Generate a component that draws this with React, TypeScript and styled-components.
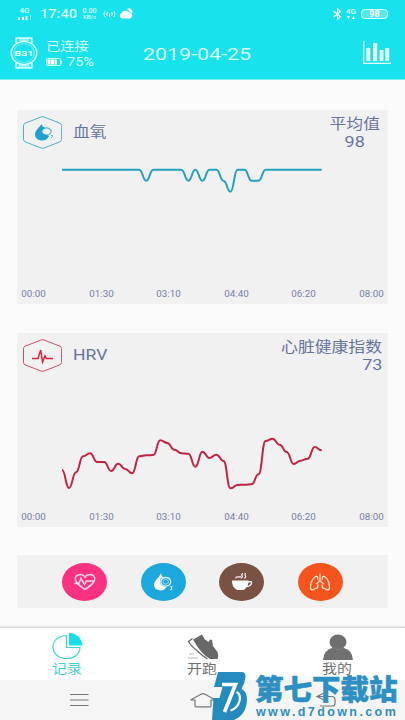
import styled, { createGlobalStyle } from 'styled-components';

import type { ReactNode } from 'react';

const STEP = 7.02;
const CHART_LEFT = 45;

const TIMES = ['00:00', '01:30', '03:10', '04:40', '06:20', '08:00'];

const OXYGEN = [
	98, 98, 98, 98, 98, 98, 98, 98, 98, 98, 98, 98, 97, 98, 98, 98, 98, 98, 97,
	98, 97, 98, 98, 97, 96, 98, 98, 97, 97, 98, 98, 98, 98, 98, 98, 98, 98, 98,
].map(value => 7.7 + (98 - value) * 11);

const HRV = [
	85, 103, 87.3, 71.3, 68.3, 77, 77, 86, 78.7, 84, 88.3, 71.3, 70.3, 70, 55.3,
	58, 64.7, 68.3, 68.7, 81.7, 66.7, 73, 69.7, 76, 103.3, 100, 99.7, 99.3, 89.3,
	56, 53.7, 59.7, 67, 79, 75.7, 73.7, 62, 65.3,
];

// Horizontal bezier: both control points sit halfway between two samples
function smoothPath(values: number[]) {
	return values
		.map((y, i) => {
			const x = CHART_LEFT + i * STEP;
			if (i === 0) return `M${x} ${y}`;
			const mid = x - STEP / 2;
			return `C${mid} ${values[i - 1]} ${mid} ${y} ${x} ${y}`;
		})
		.join('');
}

interface ChartCardProps {
	title: string;
	titleScale: number;
	label: string;
	value: string;
	align: 'center' | 'flex-end';
	color: string;
	values: number[];
	icon: ReactNode;
}

function ChartCard(props: ChartCardProps) {
	return (
		<Card>
			<CardHeader>
				<HexIcon viewBox="0 0 39 33" fill="none">
					<path
						d="M18 1 Q19.5 .4 21 1 L37 7.2 Q38.6 8 38.6 9.5 V23.5 Q38.6 25 37 25.8 L21 32 Q19.5 32.6 18 32 L2 25.8 Q.5 25 .5 23.5 V9.5 Q.5 8 2 7.2Z"
						stroke={props.color}
						strokeWidth=".8"
					/>
					{props.icon}
				</HexIcon>
				<CardTitle $scale={props.titleScale}>{props.title}</CardTitle>
				<Summary $align={props.align}>
					<SummaryLabel $align={props.align}>{props.label}</SummaryLabel>
					<SummaryValue $align={props.align}>{props.value}</SummaryValue>
				</Summary>
			</CardHeader>
			<Chart viewBox="0 0 371 122" fill="none">
				<path
					d={smoothPath(props.values)}
					stroke={props.color}
					strokeWidth="2"
				/>
			</Chart>
			<Axis>
				{TIMES.map(time => (
					<Tick key={time}>{time}</Tick>
				))}
			</Axis>
		</Card>
	);
}

function Header() {
	return (
		<TopBar>
			<StatusBar>
				<Signal>
					<Tiny $size={8}>4G</Tiny>
					<svg width="13" height="5" viewBox="0 0 13 5" fill="#fff">
						<path d="M0 2.5h2V5H0zM4 2h2v3H4zM7.5 1h2v4h-2z" />
						<path d="M12 0h1v5h-1z" opacity=".5" />
					</svg>
				</Signal>
				<Clock>17:40</Clock>
				<Speed>
					<Tiny $size={7}>0.00</Tiny>
					<Tiny $size={6}>KB/s</Tiny>
				</Speed>
				<WaveIcon viewBox="0 0 13 8" fill="none" stroke="#fff" strokeWidth=".9">
					<path d="M2.2 1Q-.4 4 2.2 7M4.4 2.2q-1.6 1.8 0 3.6M10.8 1q2.6 3 0 6M8.6 2.2q1.6 1.8 0 3.6M6.5 3.3V7" />
				</WaveIcon>
				<CloudIcon viewBox="0 0 14 11" fill="#fff">
					<path d="M3 10.5a2.9 2.9 0 0 1-.3-5.6A4 4 0 0 1 9.7 4.3a3.2 3.2 0 0 1 1.3 6.2z" />
					<path d="M8 1a3.4 3.4 0 0 1 5 4.4Q11.600 4 10.400 3.700 9.600 2 8 1z" />
				</CloudIcon>
				<StatusEnd>
					<svg width="9" height="12" viewBox="0 0 9 12" fill="none" stroke="#fff" strokeWidth="1.1">
						<path d="M.8 3.2 7.5 8.6 4.5 11V1l3 2.4L.8 8.8" />
					</svg>
					<Signal $narrow>
						<Tiny $size={8}>4G</Tiny>
						<svg width="8" height="3" viewBox="0 0 8 3" fill="#fff">
							<path d="M0 0h3L1.5 3zM5 3h3L6.5 0z" />
						</svg>
					</Signal>
					<PhoneBattery>98</PhoneBattery>
				</StatusEnd>
			</StatusBar>
			<TitleBar>
				<WatchIcon viewBox="0 0 28 32" fill="none" stroke="#d4fcfc">
					<path d="M6.3 6V1.2h15.4V6M6.3 26v4.8h15.4V26" strokeWidth="1.8" />
					<path d="M9 3.2h10M9 28.8h10" strokeWidth="1.3" />
					<ellipse cx="14" cy="16" rx="12.7" ry="11.5" strokeWidth="1.6" />
					<ellipse cx="14" cy="16" rx="10.4" ry="9.3" strokeWidth=".5" />
					<text
						x="14"
						y="18.8"
						textAnchor="middle"
						textLength="19"
						lengthAdjust="spacingAndGlyphs"
						fill="#e8ffff"
						stroke="none"
						fontSize="8"
						fontWeight="700"
					>
						B31
					</text>
				</WatchIcon>
				<Device>
					<DeviceState>已连接</DeviceState>
					<DeviceBattery>
						<svg width="17" height="8" viewBox="0 0 17 8" fill="none">
							<rect x=".5" y=".5" width="14" height="7" rx="1" stroke="#d8ffff" />
							<path d="M1.5 1.5h3v5h-3zM5 1.500h3v5H5zM8.500 1.500h2.500v5H8.500zM15.200 2.500H16v3h-.8z" fill="#fff" />
						</svg>
						<Percent>75%</Percent>
					</DeviceBattery>
				</Device>
				<DateText>2019-04-25</DateText>
				<StatsIcon viewBox="0 0 28 24" fill="#e8ffff">
					<path d="M0 0h1.3v21.8H28V23H0z" />
					<path d="M3.3 7h4v13h-4zM10 2h4.2v18H10zM16.6 9h3.8v11h-3.8zM22.3 7h3.9v13h-3.9z" />
				</StatsIcon>
			</TitleBar>
		</TopBar>
	);
}

function HeartGlyph() {
	return (
		<Glyph viewBox="0 0 24 18" fill="none" stroke="#ffd9e8" strokeWidth="1.5">
			<path d="M12 16.5C7 13 2.3 10 2.3 5.8 2.3 1 9.2.2 12 4 14.8.2 21.7 1 21.7 5.8 21.7 10 17 13 12 16.5z" />
			<path d="M1.500 10.500 6 10l2-4.500 3.500 6 2-3.500H21" />
		</Glyph>
	);
}

function DropGlyph() {
	return (
		<Glyph viewBox="0 0 24 18" fill="none">
			<path d="M10 0C9 3.8 3 7.5 3 12.2a6.5 5.8 0 0 0 12.5 1.5q-6.500 0-6.500-4.700Q9 5 12 4.200 10 2.500 10 0z" fill="#fff" />
			<ellipse cx="14.8" cy="8.8" rx="4.9" ry="4.3" stroke="#e8faff" strokeWidth="1.3" />
			<ellipse cx="14.8" cy="8.8" rx="2.7" ry="2.3" stroke="#bdeafa" strokeWidth=".7" />
			<path d="M19 13.6h2.3L20 15q1.7 0 1 1.5-1 .6-2 0" stroke="#e8faff" strokeWidth=".8" />
		</Glyph>
	);
}

function CupGlyph() {
	return (
		<Glyph viewBox="0 0 24 18" fill="none">
			<path d="M2 7.5h16.5c0 5-2 7.7-4 8.7l-.5.8H7l-.8-.8C3.8 15 2 12.5 2 7.5z" fill="#fff" />
			<path d="M18 9q3.800-1 3.600 1-.5 3-5 3.600" stroke="#fff" strokeWidth="1.400" />
			<path d="M5.500 5.300Q6 3.600 8 4t2.500-1M10.500 5Q13 4.500 12 2.800T13 .6M14 5.300q2.300-1 1.400-2.600T15.600 0" stroke="#fff" strokeWidth="1.100" />
		</Glyph>
	);
}

function LungsGlyph() {
	return (
		<Glyph viewBox="0 0 24 18" fill="none" stroke="#ffe0cc" strokeWidth="1.3">
			<path d="M12 .5V8L8.2 11M12 8l3.8 3" />
			<path d="M9.800 7V5.500C9.800 3.600 8.600 3 7.300 3.800 4.200 6 2.500 10.500 2.500 14.500c0 2.500 1.300 2.700 3.200 1.800l2-.8q2.600-.6 2.200-4" />
			<path d="M14.200 7V5.500c0-1.900 1.200-2.500 2.500-1.700 3.100 2.200 4.800 6.700 4.800 10.700 0 2.500-1.300 2.700-3.200 1.800l-2-.8q-2.600-.6-2.200-4" />
		</Glyph>
	);
}

function Watermark() {
	return (
		<WatermarkBox>
			<svg width="36" height="48" viewBox="0 0 36 48">
				<path
					d="M6 0h23q5 0 4.500 5-.5 6-4 12 6 3 5.500 11-1 15-13 20H0l1.500-22h6l3-11H2z"
					fill="#258bbd"
				/>
				<path d="M10 12.500h13.500L12.500 40" fill="none" stroke="#fff" strokeWidth="3.600" />
				<path d="M24.500 20q4.500 2 3 9-2 7.500-9 9.500" fill="none" stroke="#fff" strokeWidth="2.200" />
			</svg>
			<WatermarkText>
				<SiteName>第七下载站</SiteName>
				<SiteUrl>www.d7down.com</SiteUrl>
			</WatermarkText>
		</WatermarkBox>
	);
}

export default function App() {
	return (
		<>
			<GlobalStyle />
			<Screen>
				<Header />
				<Content>
					<ChartCard
						title="血氧"
						titleScale={1.15}
						label="平均值"
						value="98"
						align="center"
						color="#249fbd"
						values={OXYGEN}
						icon={
							<>
								<path d="M18.5 8C17 11 12 14 12 18.5 12 22 15 24.5 19 24.5q5 0 7-4.5l-6-3 2-5.500Q19 11 18.500 8z" fill="#1fa0d2" />
								<ellipse cx="23.5" cy="15.5" rx="4.6" ry="3.6" fill="#f1f1f1" stroke="#1fa0d2" />
								<path d="M28 19.5q2-.5 1.5.8L28 22" stroke="#1fa0d2" strokeWidth=".8" />
							</>
						}
					/>
					<ChartCard
						title="HRV"
						titleScale={1.13}
						label="心脏健康指数"
						value="73"
						align="flex-end"
						color="#c22443"
						values={HRV}
						icon={
							<path
								d="M9 19.500h6l2.700-8.500L19.500 23l2.500-6 1.500 2.500h6.500"
								stroke="#dc2340"
								strokeWidth="1.500"
							/>
						}
					/>
					<Actions>
						<Action $color="#fb3282"><HeartGlyph /></Action>
						<Action $color="#1ca8dd"><DropGlyph /></Action>
						<Action $color="#795243"><CupGlyph /></Action>
						<Action $color="#f3551c"><LungsGlyph /></Action>
					</Actions>
				</Content>
				<TabBar>
					<Tab $active>
						<TabIcon viewBox="0 0 32 27" fill="none">
							<path d="M14.5 2.5C6.5 2.7 1 7.5 1 14s6 11.5 13.5 11.5S28 21 28 14.5H14.5z" stroke="#46cfd3" strokeWidth="1.2" />
							<path d="M17 0q12 .8 13.5 12.5H17z" fill="#18dfe6" />
						</TabIcon>
						<TabLabel>记录</TabLabel>
					</Tab>
					<Tab>
						<TabIcon viewBox="0 0 32 27">
							<path d="M6 6.500 15 1.500l2.500 4.500 4 3 1.500-2.500 2 .5 1 6 4.500 6q1.500 4 0 7H23Q14 21 6 6.500z" fill="#686868" />
							<path d="M5.500 5.500 1.500 8.500Q4 13 11 18.500q5 5 9.500 7.500" fill="none" stroke="#686868" strokeWidth="1.300" />
							<path d="M2 21h5M1 25h10" stroke="#aaa" strokeWidth=".8" />
						</TabIcon>
						<TabLabel>开跑</TabLabel>
					</Tab>
					<Tab>
						<TabIcon viewBox="0 0 32 27" fill="#707070">
							<ellipse cx="16" cy="9" rx="8.5" ry="7.5" />
							<path d="M1 27q.5-10 10-12.2 5 3 10 0Q30.5 17 31 27z" />
						</TabIcon>
						<TabLabel>我的</TabLabel>
					</Tab>
				</TabBar>
				<SystemNav>
					<NavIcon viewBox="0 0 28 16">
						<path d="M5 2.5h18.5M5 8h18.5M5 13.5h18.5" />
					</NavIcon>
					<NavIcon viewBox="0 0 28 16">
						<path d="M6 8H1.5L12 2.2q2-1 4 0L26.5 8H22v6q0 .8-1 .8H7q-1 0-1-.8z" />
					</NavIcon>
					<NavIcon viewBox="0 0 28 16">
						<path d="M11 1 4 4.5 11 8M4 4.500h15q3 0 3 3v4q0 2.500-3 2.500H7" />
					</NavIcon>
				</SystemNav>
				<Watermark />
			</Screen>
		</>
	);
}

const GlobalStyle = createGlobalStyle`
	* {
		box-sizing: border-box;
	}

	body {
		margin: 0;
		overflow: hidden;
		font-family: Roboto, 'Noto Sans CJK SC', sans-serif;
	}

	svg {
		display: block;
		flex-shrink: 0;
	}
`;

const Screen = styled.div`
	position: relative;
	display: flex;
	flex-direction: column;
	width: 405px;
	height: 720px;
	background: #fbfbfb;
	overflow: hidden;
`;

const TopBar = styled.header`
	height: 80px;
	background: #18e2eb;
	border-bottom: 1px solid #7cecf0;
	color: #d8fdfd;
`;

const StatusBar = styled.div`
	display: flex;
	align-items: center;
	height: 27px;
	padding: 0 17px;
`;

const Signal = styled.div<{ $narrow?: boolean }>`
	display: flex;
	flex-direction: column;
	align-items: center;
	gap: 1px;
	width: ${({ $narrow }) => ($narrow ? 12 : 15)}px;
`;

const Tiny = styled.span<{ $size: number }>`
	font-size: ${({ $size }) => $size}px;
	line-height: 6px;
	font-weight: 500;
`;

const Clock = styled.span`
	width: 37px;
	margin-left: 7.5px;
	font-size: 12.5px;
	line-height: 14px;
	font-weight: 500;
	transform: scaleX(1.17);
	transform-origin: left;
`;

const Speed = styled.div`
	display: flex;
	flex-direction: column;
	align-items: center;
	width: 16px;
	margin-left: 5px;
`;

const WaveIcon = styled.svg`
	width: 13px;
	height: 8px;
	margin-left: 5px;
`;

const CloudIcon = styled.svg`
	width: 14px;
	height: 11px;
	margin-left: 3px;
`;

const StatusEnd = styled.div`
	display: flex;
	align-items: center;
	gap: 3px;
	margin-left: auto;
`;

const PhoneBattery = styled.div`
	width: 27px;
	height: 10px;
	margin-left: 1px;
	border: 1px solid #d8fdfd;
	border-radius: 4px;
	background: #58e6ed;
	color: #fff;
	font-size: 9px;
	line-height: 8px;
	font-weight: 700;
	text-align: center;
`;

const TitleBar = styled.div`
	display: flex;
	align-items: center;
	height: 52px;
	padding: 0 14px 0 10px;
`;

const WatchIcon = styled.svg`
	width: 28px;
	height: 32px;
`;

const Device = styled.div`
	width: 97px;
	padding: 2px 0 0 8px;
`;

const DeviceState = styled.div`
	width: 39px;
	font-size: 12.5px;
	line-height: 15px;
	transform: scaleX(1.14);
	transform-origin: left;
`;

const DeviceBattery = styled.div`
	display: flex;
	align-items: center;
	gap: 4px;
	height: 15px;
`;

const Percent = styled.span`
	font-size: 12.5px;
	line-height: 15px;
	transform: scaleX(1.16);
	transform-origin: left;
`;

const DateText = styled.h1`
	margin: 2px 0 0 8px;
	font-size: 17px;
	font-weight: 400;
	line-height: 20px;
	transform: scaleX(1.26);
	transform-origin: left;
`;

const StatsIcon = styled.svg`
	width: 28px;
	height: 24px;
	margin-left: auto;
`;

const Content = styled.main`
	display: flex;
	flex-direction: column;
	gap: 29px;
	height: 547px;
	padding: 30px 17px 0;
`;

const Card = styled.section`
	flex-shrink: 0;
	height: 194px;
	background: #f1f1f1;
	color: #6674a0;
`;

const CardHeader = styled.div`
	display: flex;
	height: 52px;
	padding: 6px 6px 0;
`;

const HexIcon = styled.svg`
	width: 39px;
	height: 33px;
`;

const CardTitle = styled.h2<{ $scale: number }>`
	margin: 0 0 0 11px;
	font-size: ${({ $scale }) => ($scale > 1.14 ? 14.5 : 15.5)}px;
	font-weight: 400;
	line-height: 33px;
	transform: scaleX(${({ $scale }) => $scale});
	transform-origin: left;
`;

const Summary = styled.div<{ $align: string }>`
	display: flex;
	flex-direction: column;
	align-items: ${({ $align }) => $align};
	margin-left: auto;
	padding-right: ${({ $align }) => ($align === 'center' ? 6 : 0)}px;
`;

const SummaryLabel = styled.span<{ $align: string }>`
	font-size: 14.5px;
	line-height: 17px;
	transform: scaleX(1.16);
	transform-origin: ${({ $align }) => ($align === 'center' ? 'center' : 'right')};
`;

const SummaryValue = styled(SummaryLabel)`
	font-size: 15.5px;
	line-height: 18px;
`;

const Chart = styled.svg`
	width: 371px;
	height: 122px;
`;

const Axis = styled.div`
	display: flex;
	justify-content: space-between;
	align-items: center;
	height: 20px;
	padding: 0 4px;
`;

const Tick = styled.span`
	display: flex;
	justify-content: center;
	width: 25px;
	color: #7480a8;
	font-size: 8.3px;
	line-height: 10px;
	transform: scaleX(1.18);
`;

const Actions = styled.div`
	display: flex;
	flex-shrink: 0;
	justify-content: space-between;
	align-items: center;
	height: 53px;
	margin-top: -1px;
	padding: 0 45px;
	background: #f1f1f1;
`;

const Action = styled.button<{ $color: string }>`
	display: flex;
	align-items: center;
	justify-content: center;
	width: 45px;
	height: 38px;
	padding: 0;
	border: 0;
	border-radius: 50%;
	background: ${({ $color }) => $color};
`;

const Glyph = styled.svg`
	width: 24px;
	height: 18px;
`;

const TabBar = styled.nav`
	display: flex;
	height: 53px;
	border-top: 1px solid #d6d6d6;
	background: #fff;
	box-shadow: 0 -1px 2px rgba(0, 0, 0, 0.1);
`;

const Tab = styled.div<{ $active?: boolean }>`
	display: flex;
	flex: 1;
	flex-direction: column;
	align-items: center;
	padding-top: 5px;
	color: ${({ $active }) => ($active ? '#46cfd3' : '#707070')};
`;

const TabIcon = styled.svg`
	width: 32px;
	height: 27px;
`;

const TabLabel = styled.span`
	margin-top: 1px;
	font-size: 13px;
	line-height: 15px;
	transform: scaleX(1.15);
`;

const SystemNav = styled.div`
	display: flex;
	justify-content: space-between;
	height: 40px;
	padding: 12px 64px 0 65px;
	background: #f5f5f5;
`;

const NavIcon = styled.svg`
	width: 28px;
	height: 16px;
	fill: none;
	stroke: #777;
	stroke-width: 1.2;
`;

const WatermarkBox = styled.div`
	position: absolute;
	left: 212px;
	top: 672px;
	display: flex;
	gap: 7px;
	color: #2d8fc2;
`;

const WatermarkText = styled.div`
	width: 145px;
	white-space: nowrap;
`;

const SiteName = styled.div`
	margin-top: -1px;
	font-family: 'Noto Sans CJK SC', sans-serif;
	font-size: 28.5px;
	font-weight: 900;
	line-height: 33px;
	-webkit-text-stroke: 0.5px #2d8fc2;
`;

const SiteUrl = styled.div`
	margin-top: 1px;
	padding-left: 1px;
	font-family: 'Liberation Sans', sans-serif;
	font-size: 12.5px;
	font-weight: 700;
	line-height: 15px;
	letter-spacing: 2.4px;
`;
